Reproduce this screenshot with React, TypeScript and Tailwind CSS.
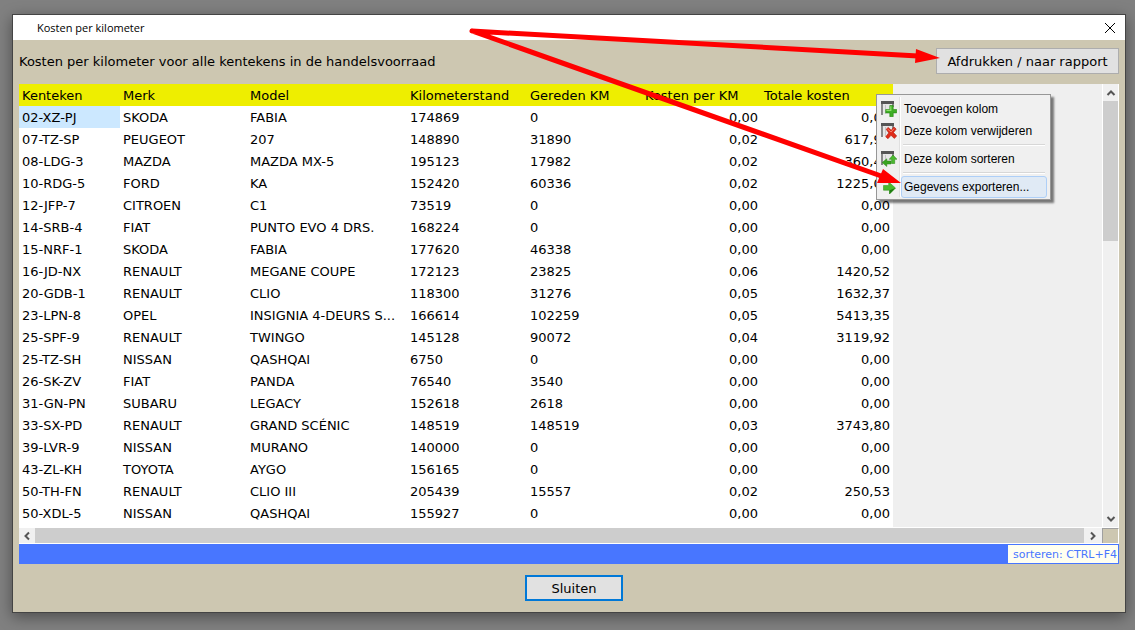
import { ReactNode } from "react";
import clsx from "clsx";

type Row = [string, string, string, string, string, string, string];

const columns = [
  { label: "Kenteken", width: "w-[101px]" },
  { label: "Merk", width: "w-[127px]" },
  { label: "Model", width: "w-[160px]" },
  { label: "Kilometerstand", width: "w-[120px]" },
  { label: "Gereden KM", width: "w-[115px]" },
  { label: "Kosten per KM", width: "w-[119px]" },
  { label: "Totale kosten", width: "w-[132px]" },
];

const rows: Row[] = [
  ["02-XZ-PJ", "SKODA", "FABIA", "174869", "0", "0,00", "0,00"],
  ["07-TZ-SP", "PEUGEOT", "207", "148890", "31890", "0,02", "617,95"],
  ["08-LDG-3", "MAZDA", "MAZDA MX-5", "195123", "17982", "0,02", "360,42"],
  ["10-RDG-5", "FORD", "KA", "152420", "60336", "0,02", "1225,00"],
  ["12-JFP-7", "CITROEN", "C1", "73519", "0", "0,00", "0,00"],
  ["14-SRB-4", "FIAT", "PUNTO EVO 4 DRS.", "168224", "0", "0,00", "0,00"],
  ["15-NRF-1", "SKODA", "FABIA", "177620", "46338", "0,00", "0,00"],
  ["16-JD-NX", "RENAULT", "MEGANE COUPE", "172123", "23825", "0,06", "1420,52"],
  ["20-GDB-1", "RENAULT", "CLIO", "118300", "31276", "0,05", "1632,37"],
  ["23-LPN-8", "OPEL", "INSIGNIA 4-DEURS S...", "166614", "102259", "0,05", "5413,35"],
  ["25-SPF-9", "RENAULT", "TWINGO", "145128", "90072", "0,04", "3119,92"],
  ["25-TZ-SH", "NISSAN", "QASHQAI", "6750", "0", "0,00", "0,00"],
  ["26-SK-ZV", "FIAT", "PANDA", "76540", "3540", "0,00", "0,00"],
  ["31-GN-PN", "SUBARU", "LEGACY", "152618", "2618", "0,00", "0,00"],
  ["33-SX-PD", "RENAULT", "GRAND SCÉNIC", "148519", "148519", "0,03", "3743,80"],
  ["39-LVR-9", "NISSAN", "MURANO", "140000", "0", "0,00", "0,00"],
  ["43-ZL-KH", "TOYOTA", "AYGO", "156165", "0", "0,00", "0,00"],
  ["50-TH-FN", "RENAULT", "CLIO III", "205439", "15557", "0,02", "250,53"],
  ["50-XDL-5", "NISSAN", "QASHQAI", "155927", "0", "0,00", "0,00"],
];

const Chevron = ({ d }: { d: string }) => (
  <svg viewBox="0 0 10 10" className="size-[10px]" fill="none" stroke="#555" strokeWidth="2">
    <path d={d} />
  </svg>
);

const GridSheet = () => (
  <>
    <path d="M2 3h10v10H2z" fill="#e6e6e6" />
    <path d="M0 0h13v3H0z" fill="#555" />
    <path d="M1 3v11M12 3v3" stroke="#5c5c5c" strokeWidth="1.4" />
    <path d="M4.5 4v9" stroke="#c4c4c4" />
  </>
);

const AddIcon = () => (
  <svg viewBox="0 0 16 16" className="size-4">
    <GridSheet />
    <path d="M8.8 4.5h3.4v4h3.5v3.4h-3.5v3.8H8.8v-3.8H4.7V8.5h4.1z" fill="#3fae26" stroke="#23850f" strokeWidth="0.6" />
    <path d="M9.8 5.3v4H5.4" stroke="#8fe06c" strokeWidth="1.2" fill="none" />
  </svg>
);

const RemoveIcon = () => (
  <svg viewBox="0 0 16 16" className="size-4">
    <GridSheet />
    <path
      d="M5.2 6.3l2-1.9 3 2.9 2.7-3.2 2.3 1.9-2.7 3.5 3.2 3.6-2.4 2.3-3.3-3.1-3 3.4-2.3-1.9 3.1-3.9z"
      fill="#e02c1a"
      stroke="#b01a0c"
      strokeWidth="0.6"
    />
    <path d="M6.5 6l3.6 3L13 5.6" stroke="#f5806c" fill="none" />
  </svg>
);

const SortIcon = () => (
  <svg viewBox="0 0 16 16" className="size-4">
    <GridSheet />
    <path
      d="M12 4l4 4.3h-2.3v4.2H10.6V8.3H8.2z"
      fill="#4bb930"
      stroke="#23800f"
      strokeWidth="0.5"
    />
    <path d="M5.8 7.8V10H10v3H5.8v2.5L1.2 11.6z" fill="#3aa522" stroke="#23800f" strokeWidth="0.5" />
  </svg>
);

const ExportIcon = () => (
  <svg viewBox="0 0 16 16" className="size-4">
    <path d="M2.5 6.5h5.2V3L14.5 9 8.5 15v-3.8h-6z" fill="#4ab82e" stroke="#3a9623" strokeWidth="0.6" />
    <path d="M8.5 15v-3.8L14.5 9z" fill="#1f7d12" />
  </svg>
);

const MenuItem = ({
  icon,
  label,
  active,
}: {
  icon: ReactNode;
  label: string;
  active?: boolean;
}) => (
  <button type="button" role="menuitem" className="flex h-[22px] w-full items-center">
    <span className="flex w-6 shrink-0 justify-center">{icon}</span>
    <span
      className={clsx(
        "flex flex-1 items-center rounded-[3px] border py-[2px] pl-[2px] whitespace-nowrap",
        active ? "border-[#aecff7] bg-[#e0eaf5]" : "border-transparent"
      )}
    >
      {label}
    </span>
  </button>
);

const MenuSeparator = () => (
  <div role="separator" className="my-[2px] mr-[2px] ml-[26px] h-[2px] border-b border-white bg-[#d7d7d7]" />
);

const ContextMenu = () => (
  <div
    role="menu"
    className="absolute top-[10px] right-[68px] w-[175px] border border-[#979797] bg-[#f0f0f0] pt-[3px] pr-[3px] pb-px font-['Liberation_Sans',Arial,sans-serif] text-xs text-black shadow-[3px_3px_2px_rgba(0,0,0,0.5)]"
  >
    <div className="absolute top-[2px] bottom-[2px] left-[22px] w-[2px] border-r border-white bg-[#e0e0e0]" />
    <div className="relative">
      <MenuItem icon={<AddIcon />} label="Toevoegen kolom" />
      <MenuItem icon={<RemoveIcon />} label="Deze kolom verwijderen" />
      <MenuSeparator />
      <MenuItem icon={<SortIcon />} label="Deze kolom sorteren" />
      <MenuSeparator />
      <MenuItem icon={<ExportIcon />} label="Gegevens exporteren..." active />
    </div>
  </div>
);

const CostTable = () => (
  <table className="w-full table-fixed border-collapse text-left">
    <thead>
      <tr className="h-[22px] bg-[#eeee00]">
        {columns.map((column) => (
          <th key={column.label} className={clsx(column.width, "px-[3px] pt-[2px] pb-0 font-normal whitespace-nowrap")}>
            {column.label}
          </th>
        ))}
      </tr>
    </thead>
    <tbody>
      {rows.map((row, r) => (
        <tr key={row[0]} className="h-[22px]">
          {row.map((cell, c) => (
            <td
              key={c}
              className={clsx(
                "px-[3px] pt-[2px] pb-0 whitespace-nowrap",
                c > 4 && "text-right",
                r === 0 && c === 0 && "bg-[#cce8ff]"
              )}
            >
              {cell}
            </td>
          ))}
        </tr>
      ))}
    </tbody>
  </table>
);

const Arrows = () => (
  <svg width="1135" height="630" className="pointer-events-none absolute top-0 left-0" fill="red">
    <path d="M472 31L918 56M472 31L884 177" stroke="red" strokeWidth="5" strokeLinecap="round" />
    <path d="M916 49L940 58L915 63zM883 169L901 183L877 183z" />
  </svg>
);

export default function App() {
  return (
    <div className="relative min-h-screen bg-[#808080] pt-[14px] pr-[9px] pb-[17px] pl-3 font-['DejaVu_Sans',Verdana,sans-serif] text-[13px] leading-4 text-black">
      <main className="border border-[#444] bg-[#cdc7b1] shadow-[0_4px_14px_rgba(0,0,0,0.4)]">
        <header className="flex h-[25px] items-center justify-between bg-white pr-[9px] pl-6">
          <h1 className="font-['Open_Sans',sans-serif] text-[11px]">Kosten per kilometer</h1>
          <button type="button" aria-label="Sluiten">
            <svg viewBox="0 0 12 12" className="size-3" stroke="#000" fill="none">
              <path d="M1 1l10 10M11 1L1 11" />
            </svg>
          </button>
        </header>

        <div className="px-[6px] pt-2 pb-[11px]">
          <div className="flex items-center justify-between">
            <p className="pt-[2px]">Kosten per kilometer voor alle kentekens in de handelsvoorraad</p>
            <button type="button" className="h-[26px] w-[183px] border border-[#adadad] bg-[#e1e1e1] pt-px whitespace-nowrap">
              Afdrukken / naar rapport
            </button>
          </div>

          <div className="relative mt-[10px] bg-white">
            <div className="flex bg-[#efefef]">
              <div className="w-[874px] shrink-0 bg-white pb-[3px]">
                <CostTable />
              </div>
              <div className="ml-auto flex w-[17px] flex-col items-center border-x border-white bg-[#f0f0f0]">
                <div className="flex h-[17px] items-center">
                  <Chevron d="M1.5 7L5 3.5L8.5 7" />
                </div>
                <div className="h-[140px] w-full bg-[#cdcdcd]" />
                <div className="mt-auto flex h-[17px] items-center">
                  <Chevron d="M1.5 3L5 6.5L8.5 3" />
                </div>
              </div>
            </div>
            <div className="flex h-[17px] border-y border-white bg-[#f0f0f0]">
              <div className="flex w-4 items-center justify-center">
                <Chevron d="M7 1.5L3.5 5L7 8.5" />
              </div>
              <div className="flex-1 bg-[#cdcdcd]" />
              <div className="flex w-[18px] items-center justify-center">
                <Chevron d="M3 1.5L6.5 5L3 8.5" />
              </div>
              <div className="w-[17px] border-t border-r border-l border-t-[#a0a0a0] border-r-white border-l-[#a0a0a0] bg-[#cdc7b1]" />
            </div>
            <ContextMenu />
          </div>

          <div className="flex h-5 justify-end border border-[#4876ff] bg-[#4876ff] text-[11px] text-[#4876ff]">
            <span className="flex w-[110px] items-center justify-end bg-[#fffff0] pt-px pr-px">sorteren: CTRL+F4</span>
          </div>

          <div className="mt-[11px] flex justify-center pl-[10px]">
            <button type="button" className="h-[26px] w-[98px] border-2 border-[#0078d7] bg-[#e1e1e1] pt-px">
              Sluiten
            </button>
          </div>
        </div>
      </main>
      <Arrows />
    </div>
  );
}
